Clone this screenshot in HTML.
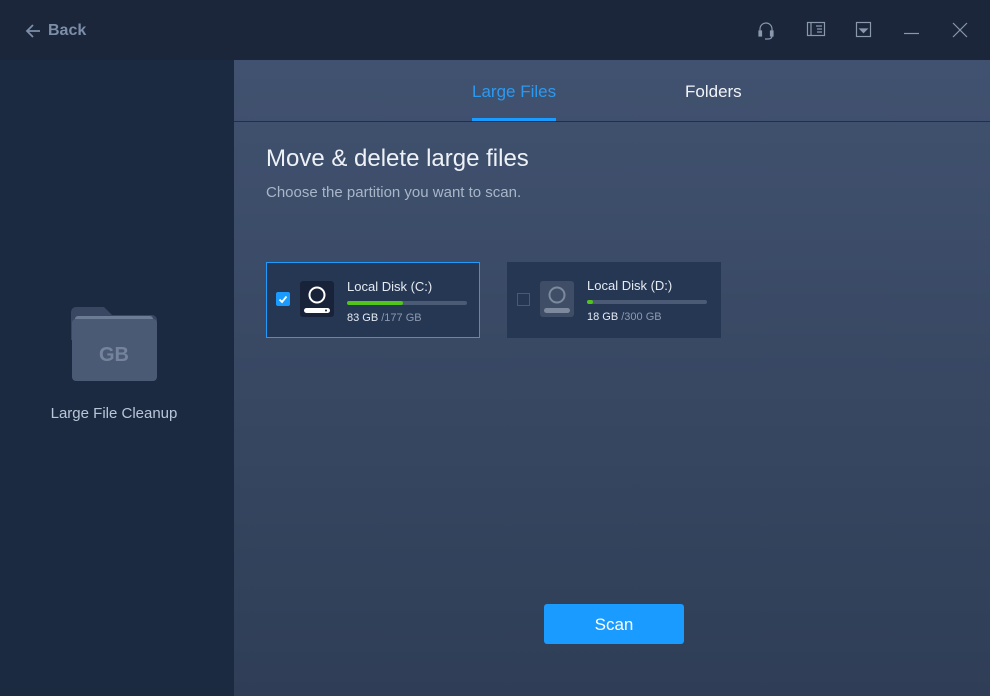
<!DOCTYPE html>
<html><head><meta charset="utf-8"><style>
*{margin:0;padding:0;box-sizing:border-box}
body{width:990px;height:696px;overflow:hidden;background:#1b263a;font-family:"Segoe UI","Liberation Sans",sans-serif;position:relative}
.top{position:absolute;left:0;top:0;width:990px;height:60px;background:#1b263a}
.back{position:absolute;left:26px;top:22px;color:#7d8ea8;font-size:16px;font-weight:bold}
.side{position:absolute;left:0;top:60px;width:234px;height:636px;background:#1c2a41}
.main{position:absolute;left:234px;top:60px;width:756px;height:636px;background:linear-gradient(#415270,#2f3e56)}
.tabline{position:absolute;left:0;top:61px;width:756px;height:1px;background:#232f45}
.tab{position:absolute;top:22px;font-size:17px}
.card{position:absolute;top:202px;width:214px;height:76px;background:#263754}
.bar{position:absolute;left:80px;top:38px;width:120px;height:4px;background:#4b5b75;border-radius:2px}
.bar i{display:block;height:4px;background:#52c41a;border-radius:2px}
.name{position:absolute;left:80px;top:16px;font-size:13px;color:#e6ebf2}
.size{position:absolute;left:80px;top:49px;font-size:11px;color:#e6ebf2}
.size span{color:#8d9ab0}
</style></head><body>
<div class="top">
<svg style="position:absolute;left:25px;top:23px" width="16" height="16" viewBox="0 0 16 16"><path d="M8 2L2 8l6 6M2 8h13" stroke="#7d8ea8" stroke-width="1.8" fill="none"/></svg>
<div class="back" style="left:48px">Back</div>
<svg style="position:absolute;left:755px;top:20px" width="220" height="22" viewBox="0 0 220 22" fill="none" stroke="#8a98ad" stroke-width="1.2">
<path d="M5 13V9a6 6 0 0 1 12 0v4"/><rect x="4" y="11" width="2.5" height="5" fill="#8a98ad"/><rect x="15.5" y="11" width="2.5" height="5" fill="#8a98ad"/><path d="M17 16q0 3-4 3h-3"/>
<rect x="52.5" y="2.5" width="17" height="13"/><path d="M61 6h6M62 9h5M62 12h5M56 2.5v13"/>
<rect x="101.5" y="2.5" width="14" height="14"/><path d="M105 9h7l-3.5 3.5z" fill="#8a98ad"/>
<path d="M149 13.5h15"/>
<path d="M212 3l-14 14M198 3l14 14"/>
</svg>
</div>
<div class="side">
<svg style="position:absolute;left:71px;top:246px" width="86" height="76" viewBox="0 0 86 76"><path d="M0 6a5 5 0 0 1 5-5h28l8 8h40a5 5 0 0 1 5 5v20H0z" fill="#3a4762"/><rect x="4" y="10" width="78" height="10" rx="3" fill="#6d7c95"/><rect x="1" y="13" width="85" height="62" rx="4" fill="#4b5a74"/><text x="43" y="55" text-anchor="middle" font-family="Liberation Sans" font-weight="bold" font-size="20" fill="#75849c">GB</text></svg>
<div style="position:absolute;left:0;width:228px;top:345px;text-align:center;color:#b9c6d8;font-size:15px">Large File Cleanup</div>
</div>
<div class="main">
<div class="tab" style="left:238px;color:#2c99f0">Large Files</div>
<div style="position:absolute;left:238px;top:58px;width:84px;height:3px;background:#1a9bff"></div>
<div class="tab" style="left:451px;color:#f1f4f8">Folders</div>
<div class="tabline"></div>
<div style="position:absolute;left:32px;top:85px;font-size:24px;color:#eef2f7;font-weight:300">Move &amp; delete large files</div>
<div style="position:absolute;left:32px;top:124px;font-size:15px;color:#a9b6c8">Choose the partition you want to scan.</div>
<div class="card" style="left:32px;border:1px solid #1f9bff">
<div style="position:absolute;left:9px;top:29px;width:14px;height:14px;background:#1a9bff;border-radius:2px"><svg width="14" height="14"><path d="M3.5 7.5l2.5 2.5 4.5-5.5" stroke="#fff" stroke-width="1.8" fill="none"/></svg></div>
<svg style="position:absolute;left:33px;top:18px" width="34" height="36" viewBox="0 0 34 36"><rect width="34" height="36" rx="3" fill="#18233a"/><circle cx="17" cy="14" r="7.5" stroke="#fff" stroke-width="2" fill="none"/><rect x="4" y="27" width="26" height="5" rx="2.5" fill="#fff"/><circle cx="26" cy="29.5" r="1" fill="#18233a"/></svg>
<div class="name">Local Disk (C:)</div>
<div class="bar"><i style="width:56px"></i></div>
<div class="size">83 GB <span>/177 GB</span></div>
</div>
<div class="card" style="left:273px">
<div style="position:absolute;left:10px;top:31px;width:13px;height:13px;border:1px solid #4a5a74"></div>
<svg style="position:absolute;left:33px;top:19px" width="34" height="36" viewBox="0 0 34 36"><rect width="34" height="36" rx="3" fill="#3f4d66"/><circle cx="17" cy="14" r="7.5" stroke="#7d899c" stroke-width="2" fill="none"/><rect x="4" y="27" width="26" height="5" rx="2.5" fill="#7d899c"/></svg>
<div class="name">Local Disk (D:)</div>
<div class="bar"><i style="width:6px"></i></div>
<div class="size">18 GB <span>/300 GB</span></div>
</div>
<div style="position:absolute;left:310px;top:544px;width:140px;height:40px;background:#1a9bff;border-radius:3px;color:#fff;font-size:17px;text-align:center;line-height:42px">Scan</div>
</div>
</body></html>
